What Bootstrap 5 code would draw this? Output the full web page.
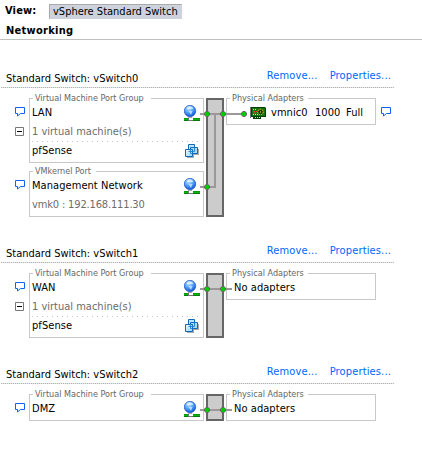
<!DOCTYPE html>
<html lang="en">
<head>
<meta charset="utf-8">
<meta name="viewport" content="width=device-width, initial-scale=1">
<title>Networking</title>
<link rel="stylesheet" href="https://cdn.jsdelivr.net/npm/bootstrap@5.3.0/dist/css/bootstrap.min.css">
<style>
body{font-family:Tahoma,"DejaVu Sans Condensed","DejaVu Sans",sans-serif;font-stretch:condensed;font-size:11px;line-height:14px;color:#000;background:#fff;white-space:nowrap;overflow:hidden}
.view-row{height:24px;padding:4px 0 0 5px}
.view-row strong{width:44px;line-height:13px;letter-spacing:.15px}
.view-tab{width:133px;height:15px;line-height:13px;padding-left:3px;background:#cdd2dc;border:1px solid #aaa;border-right-color:#cdd2dc;border-bottom-color:#cdd2dc}
.page-head{height:16px;line-height:13px;padding-left:6px;border-bottom:1px solid #c0c0c0;letter-spacing:.28px}
.vswitch-title{width:394px;padding:0 3px 0 6px;height:20px;line-height:24px}
.vswitch-title a{line-height:18px;letter-spacing:.15px}
.vswitch-title .me-2{letter-spacing:.15px}
.rule{width:393px;height:1px;margin-left:1px;background:repeating-linear-gradient(90deg,#b4b4b4 0 1px,#e4e4e4 1px 2px)}
.first{margin-top:27px}.second,.third{margin-top:25px}
.diagram{margin-top:10px}
.gutter{width:29px;padding:9px 0 0 15px}
.gutter .toggle{margin-top:10px}
.gutter .toggle + svg{margin-top:44px}
.groups{width:175px;gap:8px}
.box{border:1px solid #c8c8c8;padding:0 2px}
.cap{position:absolute;left:3px;top:-8px;height:14px;padding-left:2px;background:#fff;color:#666;font-size:9px;line-height:14px}
.cap-vm{width:118px}.cap-k{width:63px}.cap-p{width:78px}
.tall{height:65px}.kernel{height:46px}.short{height:27px}
.line1{height:24px;padding-top:7px}
.line1>span,.vm-line>span{letter-spacing:.06px}
.line2{height:18px;color:#6c6c6c;line-height:17px}
.kernel .line2{letter-spacing:-.15px}
.vm-line{height:21px;padding-top:3px;background:repeating-linear-gradient(90deg,#c4c4c4 0 1px,transparent 1px 5px) 0 0/100% 1px no-repeat}
.trunk{width:18px;margin-left:2px;background:#ccc;border:2px solid #666}
.adapters{width:150px;height:27px;margin-left:2px;padding-left:7px}
.wires{position:absolute;left:0;top:0;pointer-events:none}
a{color:#06f}
svg{display:block;flex:none}
.globe{margin:-1px 1px 0 0}
.vm{margin:0 2px 0 0}
.nic{margin:1px 5px 0 16px}
.note{margin:9px 0 0 5px}
.w-nic{width:44px}.w-speed{width:31px}
</style>
</head>
<body>
<svg width="0" height="0" class="position-absolute">
<defs>
<radialGradient id="gg" cx=".4" cy=".25" r=".8"><stop offset="0" stop-color="#d9efff"/><stop offset=".4" stop-color="#66b0fa"/><stop offset=".8" stop-color="#216de5"/><stop offset="1" stop-color="#1445b5"/></radialGradient>
<linearGradient id="vg" x1="0" y1="0" x2="1" y2="1"><stop offset="0" stop-color="#f2fbff"/><stop offset="1" stop-color="#8fd4f5"/></linearGradient>
<symbol id="bubble" viewBox="0 0 10 10"><path d="M.5 .5h9v6H5.5L2.500 9V6.500H.5z" fill="#fff" stroke="#1262f0"/></symbol>
<symbol id="minus" viewBox="0 0 9 9"><path d="M.5 .5h8v8h-8z" fill="#fff" stroke="#777"/><path d="M2 4.500h5" stroke="#000"/></symbol>
<symbol id="globe" viewBox="0 0 16 17"><circle cx="6" cy="6" r="5.700" fill="url(#gg)" stroke="#1c50c8" stroke-width=".7"/><path d="M2.500 3.500C4 1 8 1 9.500 3.500L8 4H4z" fill="#e4f4ff" opacity=".75"/><path d="M4.500 6h4L7 10z" fill="#c8e8ff" opacity=".8"/><path d="M4 12h4v2H4z" fill="#aaa"/><path d="M0 13h16v3H0z" fill="#067a06"/><path d="M0 13.500h16v1.500H0z" fill="#0ab40a"/><path d="M4 13h5v3H4z" fill="#777"/><path d="M5 13h4v2H5z" fill="#fff"/></symbol>
<symbol id="vm" viewBox="0 0 14 14"><path d="M7 5h7v6H9v3H2v-2h5z" fill="#aaa"/><g fill="#bfe6fa" stroke="#1768b4"><path d="M3.500.5h6v7h-6z"/><path d="M5.500 3.500h7v6h-7z" fill="#a5dcf8"/><path d="M.5 5.500h7v7h-7z" fill="url(#vg)"/></g><path d="M3.500 7.500h6v-4M5.500 5v4.500h2" fill="none" stroke="#2c86ce"/></symbol>
<symbol id="nic" viewBox="0 0 16 12"><path d="M1 0h14l1 1v9h-5v2H3v-2H1z" fill="#063f06"/><path d="M2 1h13v8H2z" fill="#127512"/><path d="M0 0h1v11H0z" fill="#777"/><path d="M3 2h1v1H3zM5 2h1v1H5zM3 7h1v1H3zM5 7h1v1H5zM7 7h1v1H7z" fill="#ffe34d"/><path d="M3 4h2v1H3zM6 4h1v1H6zM3 5.500h3v1H3z" fill="#f33"/><circle cx="10.500" cy="5" r="2.700" fill="#143c05" stroke="#e8d83a" stroke-dasharray="1.500 .8"/><path d="M10 4.500h1v1h-1z" fill="#ff4"/><path d="M5 10h1v1H5zM7 10h1v1H7zM9 10h1v1H9z" fill="#ffe34d"/></symbol>
<symbol id="dot" viewBox="0 0 6 6"><path d="M2 0h2l2 2v2L4 6H2L0 4V2z" fill="#666"/><path d="M2 1h2l1 1v2L4 5H2L1 4V2z" fill="#0c0"/></symbol>
</defs></svg>

<header>
<div class="view-row d-flex"><strong>View:</strong><div class="view-tab">vSphere Standard Switch</div></div>
<div class="page-head fw-bold">Networking</div>
</header>

<main>
<section class="first">
<div class="vswitch-title d-flex"><span class="me-auto">Standard Switch: vSwitch0</span><a class="text-decoration-none me-2 pe-1" href="#">Remove...</a><a class="text-decoration-none" href="#">Properties...</a></div>
<div class="rule"></div>
<div class="diagram d-flex align-items-start position-relative">
<div class="gutter"><svg width="10" height="10"><use href="#bubble"/></svg><svg class="toggle" width="9" height="9"><use href="#minus"/></svg><svg width="10" height="10"><use href="#bubble"/></svg></div>
<div class="groups d-flex flex-column">
<div class="box tall position-relative"><div class="cap cap-vm">Virtual Machine Port Group</div>
<div class="line1 d-flex justify-content-between"><span>LAN</span><svg class="globe" width="16" height="17"><use href="#globe"/></svg></div>
<div class="line2">1 virtual machine(s)</div>
<div class="vm-line d-flex justify-content-between"><span>pfSense</span><svg class="vm" width="14" height="14"><use href="#vm"/></svg></div></div>
<div class="box kernel position-relative"><div class="cap cap-k">VMkernel Port</div>
<div class="line1 d-flex justify-content-between"><span>Management Network</span><svg class="globe" width="16" height="17"><use href="#globe"/></svg></div>
<div class="line2">vmk0 : 192.168.111.30</div></div>
</div>
<div class="trunk align-self-stretch"></div>
<div class="box adapters position-relative"><div class="cap cap-p">Physical Adapters</div>
<div class="line1 d-flex"><svg width="16" height="12" class="nic"><use href="#nic"/></svg><span class="w-nic">vmnic0</span><span class="w-speed">1000</span><span>Full</span></div></div>
<svg width="10" height="10" class="note"><use href="#bubble"/></svg>
<svg class="wires" width="394" height="119"><path d="M200 16h44M215 16v73h-15" fill="none" stroke="#999" stroke-width="2"/><use href="#dot" x="204" y="13" width="6" height="6"/><use href="#dot" x="220" y="13" width="6" height="6"/><use href="#dot" x="241" y="13" width="6" height="6"/><use href="#dot" x="204" y="86" width="6" height="6"/></svg>
</div>
</section>

<section class="second">
<div class="vswitch-title d-flex"><span class="me-auto">Standard Switch: vSwitch1</span><a class="text-decoration-none me-2 pe-1" href="#">Remove...</a><a class="text-decoration-none" href="#">Properties...</a></div>
<div class="rule"></div>
<div class="diagram d-flex align-items-start position-relative">
<div class="gutter"><svg width="10" height="10"><use href="#bubble"/></svg><svg class="toggle" width="9" height="9"><use href="#minus"/></svg></div>
<div class="groups d-flex flex-column">
<div class="box tall position-relative"><div class="cap cap-vm">Virtual Machine Port Group</div>
<div class="line1 d-flex justify-content-between"><span>WAN</span><svg class="globe" width="16" height="17"><use href="#globe"/></svg></div>
<div class="line2">1 virtual machine(s)</div>
<div class="vm-line d-flex justify-content-between"><span>pfSense</span><svg class="vm" width="14" height="14"><use href="#vm"/></svg></div></div>
</div>
<div class="trunk align-self-stretch"></div>
<div class="box adapters position-relative"><div class="cap cap-p">Physical Adapters</div><div class="line1"><span>No adapters</span></div></div>
<svg class="wires" width="394" height="65"><path d="M200 16h32" stroke="#999" stroke-width="2"/><use href="#dot" x="204" y="13" width="6" height="6"/><use href="#dot" x="220" y="13" width="6" height="6"/></svg>
</div>
</section>

<section class="third">
<div class="vswitch-title d-flex"><span class="me-auto">Standard Switch: vSwitch2</span><a class="text-decoration-none me-2 pe-1" href="#">Remove...</a><a class="text-decoration-none" href="#">Properties...</a></div>
<div class="rule"></div>
<div class="diagram d-flex align-items-start position-relative">
<div class="gutter"><svg width="10" height="10"><use href="#bubble"/></svg></div>
<div class="groups d-flex flex-column">
<div class="box short position-relative"><div class="cap cap-vm">Virtual Machine Port Group</div>
<div class="line1 d-flex justify-content-between"><span>DMZ</span><svg class="globe" width="16" height="17"><use href="#globe"/></svg></div></div>
</div>
<div class="trunk align-self-stretch"></div>
<div class="box adapters position-relative"><div class="cap cap-p">Physical Adapters</div><div class="line1"><span>No adapters</span></div></div>
<svg class="wires" width="394" height="27"><path d="M200 16h32" stroke="#999" stroke-width="2"/><use href="#dot" x="204" y="13" width="6" height="6"/><use href="#dot" x="220" y="13" width="6" height="6"/></svg>
</div>
</section>
</main>
<script src="https://cdn.jsdelivr.net/npm/bootstrap@5.3.0/dist/js/bootstrap.bundle.min.js"></script>
</body>
</html>
